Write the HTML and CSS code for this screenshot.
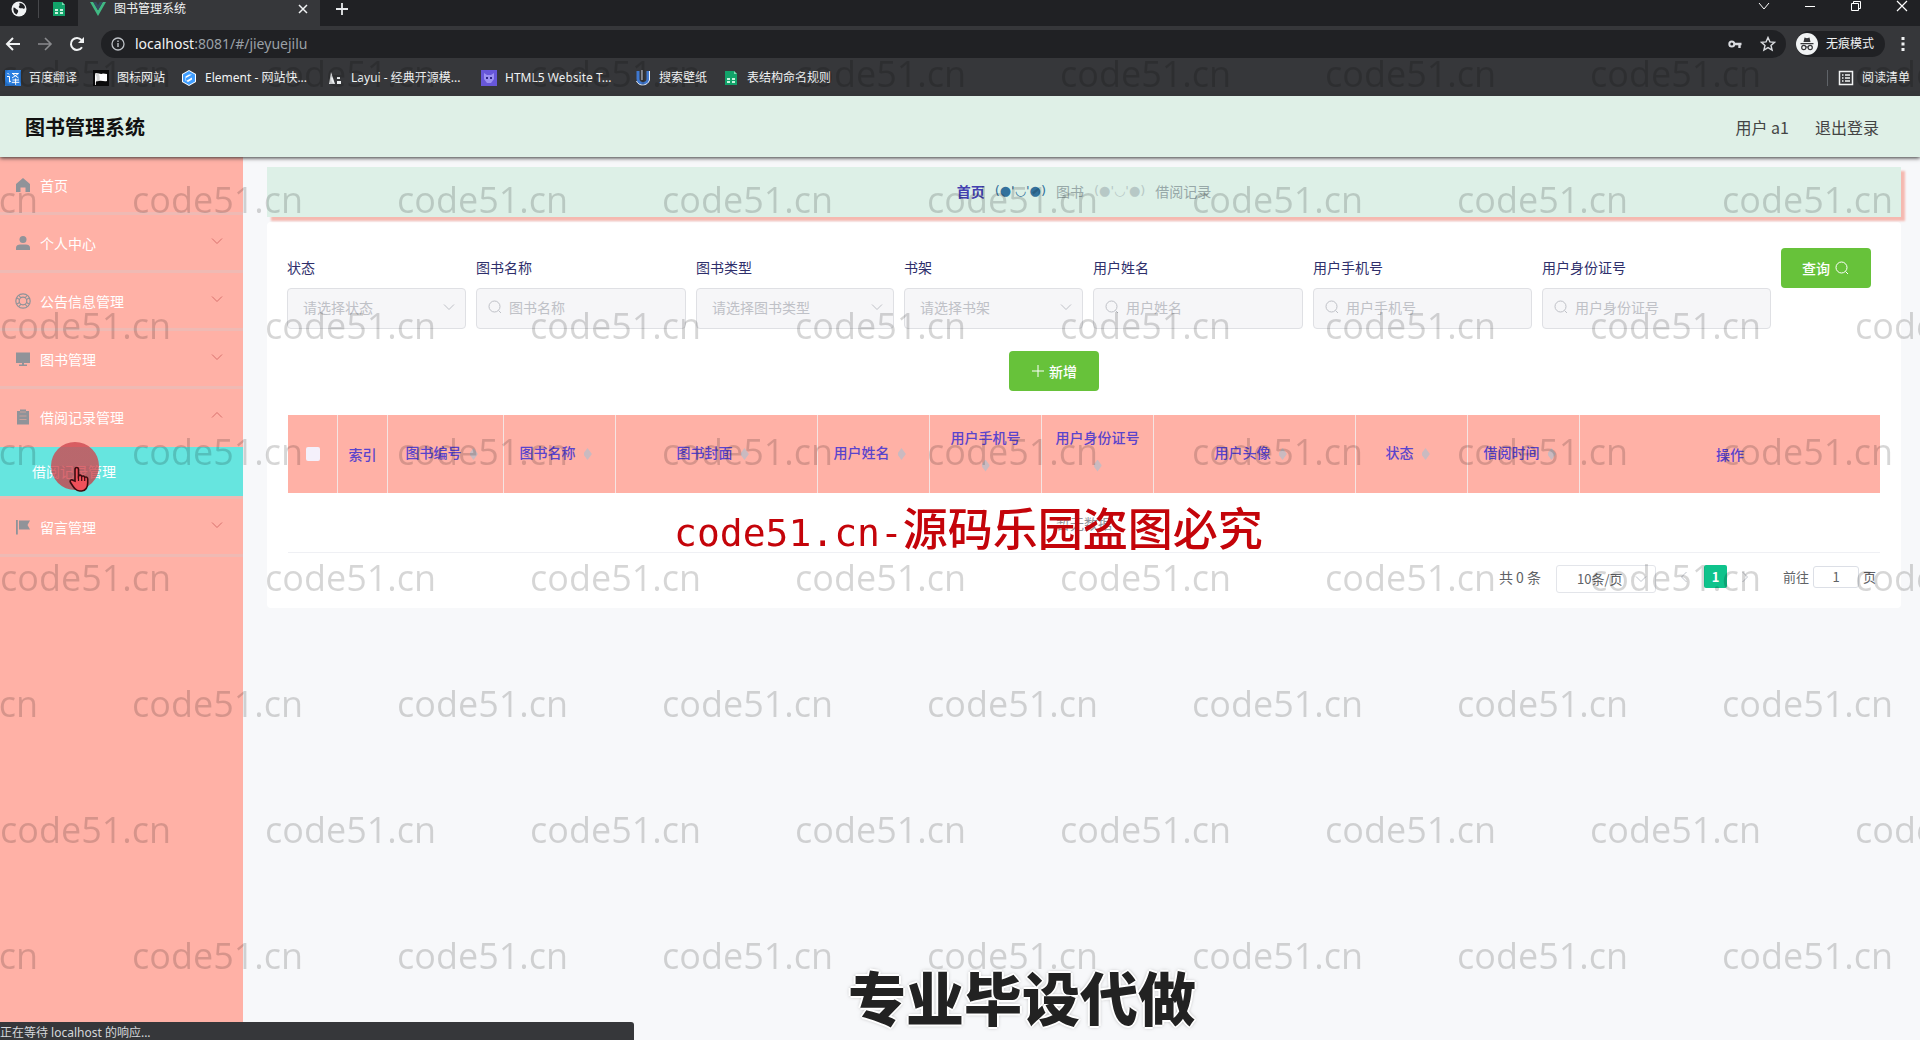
FILE: index.html
```html
<!DOCTYPE html>
<html lang="zh-CN">
<head>
<meta charset="utf-8">
<meta name="viewport" content="width=device-width, initial-scale=1">
<title>图书管理系统</title>
<link rel="stylesheet" href="styles.css">
</head>
<body>
<svg class="defs" aria-hidden="true">
  <symbol id="i-down" viewBox="0 0 12 12"><path d="M1 3.500l5 5 5-5" fill="none" stroke="currentColor"/></symbol>
  <symbol id="i-search" viewBox="0 0 16 16"><circle cx="7.500" cy="7.500" r="5.500" fill="none" stroke="currentColor"/><path d="M11.500 11.500l2.500 2.500" stroke="currentColor"/></symbol>
  <symbol id="i-sheet" viewBox="0 0 16 16"><path d="M2 1h9l3 3v11H2z" fill="#12a36a"/><path d="M11 1l3 3h-3z" fill="#7fdcb4"/><path d="M4 8h3v2H4zm5 0h3v2H9zM4 11h3v2H4zm5 0h3v2H9z" fill="#c9f3df"/></symbol>
</svg>

<div class="browser">
  <div class="tabstrip">
    <button class="pin" aria-label="标签页"><svg width="16" height="16" viewBox="0 0 16 16"><circle cx="8" cy="8" r="7.500" fill="#f1f3f4"/><path d="M2.500 6.500c2 0 2 1.500 3.500 2s1.500 2 .5 3.500l-1 1.500C3.500 12.500 2 10.500 2.500 6.500zM8.500 2c-.5 1 .5 1.500 0 2.500S7 6 8.500 7s2.500-.5 3.500.5 2-.5 2-1.500C13 3.500 11 2 8.500 2z" fill="#202124"/></svg></button>
    <button class="pin second" aria-label="表格"><svg width="16" height="16"><use href="#i-sheet"/></svg></button>
    <div class="tab"><svg width="16" height="14" viewBox="0 0 16 14"><path d="M0 0h3.200L8 8.200 12.800 0H16L8 14z" fill="#41b883"/><path d="M3.200 0h3L8 3.200 9.800 0h3L8 8.200z" fill="#35495e"/></svg><span>图书管理系统</span><button class="x" aria-label="关闭"><svg width="10" height="10" viewBox="0 0 10 10"><path d="M1 1l8 8M9 1L1 9" stroke="#f1f3f4" stroke-width="1.500"/></svg></button></div>
    <button class="plus" aria-label="新标签页"><svg width="14" height="14" viewBox="0 0 14 14"><path d="M7 1v12M1 7h12" stroke="#e8eaed" stroke-width="1.800"/></svg></button>
    <div class="winctl">
      <button aria-label="搜索标签页"><svg width="12" height="12" viewBox="0 0 12 12"><path d="M1 3l5 6 5-6" fill="none" stroke="#fff"/></svg></button>
      <button aria-label="最小化"><svg width="12" height="12" viewBox="0 0 12 12"><path d="M1 6.500h10" stroke="#fff"/></svg></button>
      <button aria-label="还原"><svg width="12" height="12" viewBox="0 0 12 12"><path d="M1.500 3.500h7v7h-7zM3.500 3V1.500h7v7H9" fill="none" stroke="#fff"/></svg></button>
      <button aria-label="关闭窗口"><svg width="12" height="12" viewBox="0 0 12 12"><path d="M1 1l10 10M11 1L1 11" stroke="#fff" stroke-width="1.200"/></svg></button>
    </div>
  </div>
  <div class="toolbar">
    <button aria-label="后退"><svg width="16" height="16" viewBox="0 0 16 16"><path d="M15 8H2M8 2L2 8l6 6" fill="none" stroke="#f1f3f4" stroke-width="2"/></svg></button>
    <button aria-label="前进"><svg width="16" height="16" viewBox="0 0 16 16"><path d="M1 8h13M8 2l6 6-6 6" fill="none" stroke="#8a8b8e" stroke-width="1.600"/></svg></button>
    <button aria-label="刷新"><svg width="16" height="16" viewBox="0 0 16 16"><path d="M13 11.200A6 6 0 1 1 12.500 4" fill="none" stroke="#f1f3f4" stroke-width="2"/><path d="M15 1v6H9z" fill="#f1f3f4"/></svg></button>
    <div class="url">
      <svg width="14" height="14" viewBox="0 0 14 14"><circle cx="7" cy="7" r="6" fill="none" stroke="#bdc1c6" stroke-width="1.300"/><path d="M7 6v4M7 3.500v1.400" stroke="#bdc1c6" stroke-width="1.400"/></svg>
      <span class="addr">localhost<i>:8081/#/jieyuejilu</i></span>
      <svg class="key" width="14" height="14" viewBox="0 0 14 14"><circle cx="3.800" cy="7" r="2.500" fill="none" stroke="#dadce0" stroke-width="2"/><path d="M6 7h7.500M11.500 7v4" stroke="#dadce0" stroke-width="2.400"/></svg>
      <svg width="16" height="16" viewBox="0 0 16 16"><path d="M8 1.500l1.900 4.400 4.700.4-3.600 3.100 1.100 4.700L8 11.600l-4.100 2.500L5 9.400 1.400 6.300l4.700-.4z" fill="none" stroke="#dadce0" stroke-width="1.400"/></svg>
    </div>
    <div class="incog"><svg width="22" height="22" viewBox="0 0 22 22"><circle cx="11" cy="11" r="11" fill="#f1f3f4"/><path d="M7.500 9l1-4.500 2.500.7 2.500-.7 1 4.500zM4.500 10h13v1.200h-13z" fill="#36373a"/><g fill="none" stroke="#36373a" stroke-width="1.200"><circle cx="7.800" cy="14.500" r="2.100"/><circle cx="14.200" cy="14.500" r="2.100"/><path d="M10 14.300q1-.8 2 0"/></g></svg><span>无痕模式</span></div>
    <button aria-label="菜单"><svg width="4" height="16" viewBox="0 0 4 16"><path d="M.5 1h3v3h-3zm0 5.500h3v3h-3zm0 5.500h3v3h-3z" fill="#f1f3f4"/></svg></button>
  </div>
  <nav class="bookmarks" aria-label="书签">
    <a href="#"><svg width="16" height="16" viewBox="0 0 16 16"><path d="M0 0h16v16H0z" fill="#2b7fe0"/><path d="M2.500 3l1.500 1.500M2 6.500h2.500V12l1.500-1M7 3.500h6.500L7 8M8 4l5.500 4M7.500 10H14M6.800 12.300h7.500M10.600 8.500V15" fill="none" stroke="#fff"/></svg>百度翻译</a>
    <a href="#"><svg width="16" height="16" viewBox="0 0 16 16"><path d="M0 0h16v16H0z" fill="#0b0b0c"/><path d="M2 3.500c3-1.500 5 1.500 8 0l4 .5v7c-3 1-5-1-8 0l-3 .5V15H2z" fill="#fff"/></svg>图标网站</a>
    <a class="bm-m" href="#"><svg width="16" height="16" viewBox="0 0 16 16"><path d="M8 0l7 4v8l-7 4-7-4V4z" fill="#fff"/><path d="M8 1l6 3.500v7L8 15l-6-3.500v-7z" fill="#409eff"/><path d="M11 4.500L5 8v3l6-3.500v2L7 12 4.500 10.500v-4L8 4.500z" fill="#fff"/></svg>Element - 网站快...</a>
    <a class="bm-l" href="#"><svg width="16" height="16" viewBox="0 0 16 16"><path d="M4 2l4 12H2zM10 7h3v2h-3zm0 4h4v3h-4z" fill="#eceff1"/></svg>Layui - 经典开源模...</a>
    <a class="bm-l" href="#"><svg width="16" height="16" viewBox="0 0 16 16"><path d="M0 0h16v16H0z" fill="#6757d9"/><path d="M3 3l3 2h4l3-2v6l-3 4H6L3 9z" fill="#9c91f2"/><path d="M5 7h2v2H5zm4 0h2v2H9z" fill="#30288a"/></svg>HTML5 Website T...</a>
    <a href="#"><svg width="16" height="16" viewBox="0 0 16 16"><path d="M3 1v8c0 6 10 6 10 0V1" fill="none" stroke="#3f78cf" stroke-width="3"/><path d="M1.500 11c2 5.500 11 5.500 13-1V1M7 0v10" fill="none" stroke="#e5edf9"/></svg>搜索壁纸</a>
    <a href="#"><svg width="16" height="16"><use href="#i-sheet"/></svg>表结构命名规则</a>
    <a href="#" class="reading"><svg width="16" height="16" viewBox="0 0 16 16"><path d="M1.500 1.500h13v13h-13zM4 5h1.500M7 5h5M4 8h1.500M7 8h5M4 11h1.500M7 11h5" fill="none" stroke="#f1f3f4" stroke-width="1.500"/></svg>阅读清单</a>
  </nav>
</div>

<header class="header">
  <h1>图书管理系统</h1>
  <div class="user"><span>用户 a1</span><a href="#">退出登录</a></div>
</header>

<div class="layout">
  <aside class="sidebar">
    <a class="item" href="#"><svg width="16" height="16" viewBox="0 0 16 16"><path d="M8 1L1 7v8h4.500v-4.500h5V15H15V7z"/></svg><span>首页</span></a>
    <a class="item" href="#"><svg width="16" height="16" viewBox="0 0 16 16"><circle cx="8" cy="4.500" r="3.500"/><path d="M1 15v-2.500C1 10.500 3 9.500 5 9.500h6c2 0 4 1 4 3V15z"/></svg><span>个人中心</span><svg class="arrow" width="12" height="12"><use href="#i-down"/></svg></a>
    <a class="item" href="#"><svg width="16" height="16" viewBox="0 0 16 16"><g fill="none" stroke="#909399" stroke-width="1.200"><circle cx="8" cy="8" r="7.200"/><circle cx="8" cy="8" r="3.800"/><path d="M4 2.500l2 2.500M12 2.500L10 5M4 13.500L6 11M12 13.500L10 11M2 5l2.500 1.500M14 5l-2.500 1.500M2 11l2.500-1.500M14 11l-2.500-1.500"/></g></svg><span>公告信息管理</span><svg class="arrow" width="12" height="12"><use href="#i-down"/></svg></a>
    <a class="item" href="#"><svg width="16" height="16" viewBox="0 0 16 16"><path d="M1 1.500h14V12H1zM7 12h2v1.500h3V15H4v-1.500h3z"/></svg><span>图书管理</span><svg class="arrow" width="12" height="12"><use href="#i-down"/></svg></a>
    <a class="item open" href="#"><svg width="16" height="16" viewBox="0 0 16 16"><path d="M2 2h3V.5h6V2h3v13.500H2z"/><path d="M5 3h6M4.500 7h7M4.500 10.500h7" stroke="#c9a19a"/></svg><span>借阅记录管理</span><svg class="arrow up" width="12" height="12"><use href="#i-down"/></svg></a>
    <a class="subitem" href="#">借阅记录管理</a>
    <a class="item" href="#"><svg width="16" height="16" viewBox="0 0 16 16"><path d="M1 1h1.800v14.500H1zM4 1.500h11L12.500 6 15 10.500H4z"/></svg><span>留言管理</span><svg class="arrow" width="12" height="12"><use href="#i-down"/></svg></a>
  </aside>

  <main class="main">
    <nav class="crumbs" aria-label="面包屑">
      <a href="#">首页</a><span class="face first">(●'◡'●)</span><span>图书</span><span class="face">(●'◡'●)</span><span>借阅记录</span>
    </nav>
    <section class="card">
      <form class="filters">
        <div class="field w-s"><label for="f1">状态</label><div class="box sel"><select id="f1"><option>请选择状态</option></select><svg width="12" height="12"><use href="#i-down"/></svg></div></div>
        <div class="field w-m"><label for="f2">图书名称</label><div class="box"><svg width="16" height="16"><use href="#i-search"/></svg><input id="f2" type="text" placeholder="图书名称"></div></div>
        <div class="field w-t"><label for="f3">图书类型</label><div class="box sel"><select id="f3"><option>请选择图书类型</option></select><svg width="12" height="12"><use href="#i-down"/></svg></div></div>
        <div class="field w-s"><label for="f4">书架</label><div class="box sel"><select id="f4"><option>请选择书架</option></select><svg width="12" height="12"><use href="#i-down"/></svg></div></div>
        <div class="field w-m"><label for="f5">用户姓名</label><div class="box"><svg width="16" height="16"><use href="#i-search"/></svg><input id="f5" type="text" placeholder="用户姓名"></div></div>
        <div class="field w-l"><label for="f6">用户手机号</label><div class="box"><svg width="16" height="16"><use href="#i-search"/></svg><input id="f6" type="text" placeholder="用户手机号"></div></div>
        <div class="field w-xl"><label for="f7">用户身份证号</label><div class="box"><svg width="16" height="16"><use href="#i-search"/></svg><input id="f7" type="text" placeholder="用户身份证号"></div></div>
        <button class="btn" type="button">查询<svg width="16" height="16"><use href="#i-search"/></svg></button>
      </form>
      <div class="actions"><button class="btn" type="button"><svg width="14" height="14" viewBox="0 0 14 14"><path d="M7 1v12M1 7h12" stroke="currentColor"/></svg>新增</button></div>
      <table class="grid">
        <colgroup><col class="c-50"><col class="c-50"><col class="c-116"><col class="c-112"><col class="c-202"><col class="c-112"><col class="c-112"><col class="c-112"><col class="c-202"><col class="c-112"><col class="c-112"><col></colgroup>
        <thead><tr>
          <th><input type="checkbox" aria-label="全选"></th><th>索引</th>
          <th>图书编号<span class="caret"></span></th><th>图书名称<span class="caret"></span></th><th>图书封面<span class="caret"></span></th><th>用户姓名<span class="caret"></span></th><th>用户手机号<span class="caret"></span></th><th>用户身份证号<span class="caret"></span></th><th>用户头像<span class="caret"></span></th><th>状态<span class="caret"></span></th><th>借阅时间<span class="caret"></span></th><th>操作</th>
        </tr></thead>
        <tbody><tr><td colspan="12">暂无数据</td></tr></tbody>
      </table>
      <div class="pager">
        <span class="total">共 0 条</span>
        <div class="size"><select aria-label="每页条数"><option>10条/页</option></select><svg width="12" height="12"><use href="#i-down"/></svg></div>
        <button class="prev" aria-label="上一页"><svg width="12" height="12"><use href="#i-down"/></svg></button>
        <button class="page">1</button>
        <button class="next" aria-label="下一页"><svg width="12" height="12"><use href="#i-down"/></svg></button>
        <label class="jump">前往<input type="text" value="1">页</label>
      </div>
    </section>
  </main>
</div>

<div class="status">正在等待 localhost 的响应...</div>

<div class="pointer"><svg width="20" height="26" viewBox="0 0 20 26"><path d="M6 15V3.500C6 .8 9.500.8 9.500 3.500V10c1-1.500 3-1 3.200.5 1-1 2.800-.6 3 .8 1.200-.8 3-.2 3 1.700v4c0 4-2 8-6 8h-2C7 25 5 22 1.500 16.500c-1-2 1-3.500 2.500-2.200z" fill="#f0505a" stroke="#3c0c10" stroke-width="1.600"/><path d="M9.500 10v5M12.700 11v4M15.700 12v3" stroke="#3c0c10" stroke-width="1.200"/></svg></div>

<div class="watermark" aria-hidden="true">
  <div><span>code51.cn</span><span>code51.cn</span><span>code51.cn</span><span>code51.cn</span><span>code51.cn</span><span>code51.cn</span><span>code51.cn</span><span>code51.cn</span></div>
  <div><span>code51.cn</span><span>code51.cn</span><span>code51.cn</span><span>code51.cn</span><span>code51.cn</span><span>code51.cn</span><span>code51.cn</span><span>code51.cn</span></div>
  <div><span>code51.cn</span><span>code51.cn</span><span>code51.cn</span><span>code51.cn</span><span>code51.cn</span><span>code51.cn</span><span>code51.cn</span><span>code51.cn</span></div>
  <div><span>code51.cn</span><span>code51.cn</span><span>code51.cn</span><span>code51.cn</span><span>code51.cn</span><span>code51.cn</span><span>code51.cn</span><span>code51.cn</span></div>
  <div><span>code51.cn</span><span>code51.cn</span><span>code51.cn</span><span>code51.cn</span><span>code51.cn</span><span>code51.cn</span><span>code51.cn</span><span>code51.cn</span></div>
  <div><span>code51.cn</span><span>code51.cn</span><span>code51.cn</span><span>code51.cn</span><span>code51.cn</span><span>code51.cn</span><span>code51.cn</span><span>code51.cn</span></div>
  <div><span>code51.cn</span><span>code51.cn</span><span>code51.cn</span><span>code51.cn</span><span>code51.cn</span><span>code51.cn</span><span>code51.cn</span><span>code51.cn</span></div>
  <div><span>code51.cn</span><span>code51.cn</span><span>code51.cn</span><span>code51.cn</span><span>code51.cn</span><span>code51.cn</span><span>code51.cn</span><span>code51.cn</span></div>
</div>
<div class="notice"><span>code51.cn-</span>源码乐园盗图必究</div>
<div class="caption">专业毕设代做</div>
</body>
</html>
```
FILE: styles.css
```css
* { box-sizing: border-box; }
body {
  margin: 0;
  min-height: 100vh;
  display: flex;
  flex-direction: column;
  position: relative;
  overflow-x: hidden;
  background: #f7f8fa;
  font: 14px/24px "Noto Sans CJK SC", sans-serif;
  color: #606266;
}
button, input, select { font: inherit; color: inherit; }
button { border: 0; padding: 0; background: none; display: flex; align-items: center; justify-content: center; }
a { color: inherit; text-decoration: none; }
svg { flex: none; display: block; }
.defs { position: absolute; width: 0; height: 0; }

/* browser window */
.browser { background: #36373a; color: #f1f3f4; font: 12px/16px "Noto Sans", "Noto Sans CJK SC", sans-serif; }
.tabstrip { display: flex; height: 26px; background: #202124; }
.pin { width: 39px; height: 18px; border-right: 1px solid #47484b; }
.pin.second { border: 0; }
.tab { display: flex; align-items: center; gap: 8px; width: 242px; padding: 0 12px 8px; background: #36373a; }
.tab .x { margin-left: auto; }
.plus { width: 44px; height: 18px; }
.winctl { display: flex; gap: 34px; margin-left: auto; height: 12px; padding-right: 12px; }
.toolbar { display: flex; align-items: center; gap: 16px; height: 36px; padding: 0 15px 0 5px; }
.url { flex: 1; display: flex; align-items: center; gap: 10px; height: 28px; padding: 0 10px; border-radius: 14px; background: #202124; }
.addr { flex: 1; font-size: 14px; }
.addr i { font-style: normal; color: #9aa0a6; }
.key { margin-right: 8px; }
.incog { display: flex; align-items: center; gap: 8px; margin-left: -6px; padding: 2px 11px 2px 0; border-radius: 14px; background: #202124; }
.bookmarks { display: flex; align-items: center; gap: 16px; height: 34px; padding: 0 10px 3px 5px; }
.bookmarks a { display: flex; align-items: center; gap: 8px; white-space: nowrap; }
.bm-m { min-width: 130px; }
.bm-l { min-width: 138px; }
.bookmarks .reading { margin-left: auto; padding-left: 10px; border-left: 1px solid #5f6368; }

/* application header */
.header { display: flex; align-items: center; justify-content: space-between; height: 61px; padding: 0 41px 0 25px; background: #dff0e7; box-shadow: 0 1px 4px #333; position: relative; z-index: 1; }
.header h1 { margin: 0; font-size: 20px; font-weight: 700; color: #111; }
.user { display: flex; gap: 26px; font-size: 16px; color: #444; }

.layout { flex: 1; display: flex; }
.sidebar { width: 243px; background: #ffb1a6; color: #fff; }
.item { display: flex; align-items: center; gap: 9px; height: 58px; padding: 0 20px 0 15px; border-bottom: 3px solid #efbab4; }
.item svg { fill: #909399; }
.item.open { border-bottom-color: #ffb1a6; }
.item .arrow { margin-left: auto; margin-bottom: 4px; color: #d9706c; }
.item .up { transform: rotate(180deg); }
.subitem { display: block; height: 52px; padding-left: 32px; line-height: 48px; background: #66e5df; border-bottom: 3px solid #efbab4; }

.main { flex: 1; min-width: 0; padding: 10px 19px 20px 24px; }
.crumbs { display: flex; align-items: center; justify-content: center; gap: 10px; height: 50px; padding-bottom: 2px; background: #ddf0e7; box-shadow: 4px 4px 2px #f5b9b0; color: #97a8a8; position: relative; }
.crumbs a { font-weight: 700; color: #4340b0; }
.face { color: #b7c8c6; font-family: "DejaVu Sans", sans-serif; font-size: 13px; }
.face.first { color: #33719c; }

.card { margin-top: 5px; padding: 26px 20px 20px; background: #fff; border-radius: 4px; }
.filters { display: flex; flex-wrap: wrap; gap: 10px; align-items: flex-start; }
.filters label { display: block; height: 40px; line-height: 38px; color: #2f2f6b; }
.w-s { width: 179px; }
.w-m { width: 210px; }
.w-t { width: 198px; }
.w-l { width: 219px; }
.w-xl { width: 229px; }
.box { display: flex; align-items: center; gap: 6px; height: 41px; padding: 0 10px 3px; border: 1px solid #dfe0e4; border-radius: 4px; background: #f6f6f8; color: #bfc1c7; }
.box.sel { padding-left: 15px; }
.box input, .box select { flex: 1; min-width: 0; width: 100%; padding: 0; border: 0; outline: 0; background: none; appearance: none; line-height: 24px; }
.box input::placeholder { color: #bfc1c7; opacity: 1; }
.btn { gap: 4px; width: 90px; height: 40px; border-radius: 4px; background: #67c23a; color: #fff; font-weight: 500; }
.actions { display: flex; justify-content: center; padding: 22px 60px 24px 0; }

.grid { width: calc(100% - 2px); margin: 0 1px; table-layout: fixed; border-collapse: separate; border-spacing: 0; }
.c-50 { width: 50px; }
.c-112 { width: 112px; }
.c-116 { width: 116px; }
.c-202 { width: 202px; }
.grid th { height: 78px; padding: 0 9px; border-right: 1px solid #f5e4e2; background: #ffb1a6; color: #5a44cc; font-weight: 500; line-height: 23px; }
.grid th:last-child { border-right: 0; }
.grid th input { appearance: none; display: block; width: 14px; height: 14px; margin: 0 auto; border-radius: 2px; background: #f4f0fb; }
.caret { display: inline-flex; width: 24px; height: 34px; align-items: center; justify-content: center; vertical-align: middle; }
.caret::before { content: ""; width: 8px; height: 12px; background: #cabac0; clip-path: polygon(50% 0, 100% 45%, 100% 55%, 50% 100%, 0 55%, 0 45%); }
.grid td { height: 60px; padding: 0; border-bottom: 1px solid #eff0f4; text-align: center; color: #909399; }

.pager { display: flex; align-items: center; justify-content: flex-end; height: 35px; padding: 12px 5px 0 0; font-size: 13px; }
.total { font-size: 14px; }
.size { display: flex; align-items: center; width: 100px; height: 28px; margin: 4px 0 0 15px; padding: 0 8px 0 20px; border: 1px solid #e3e5ea; border-radius: 3px; }
.size select { flex: 1; width: 60px; padding: 0; border: 0; background: none; appearance: none; }
.size svg, .prev, .next { color: #c0c4cc; }
.prev, .next { width: 24px; margin: 0 8px 0 16px; transform: rotate(90deg); }
.next { margin: 0 26px 0 6px; transform: rotate(-90deg); }
.page { width: 23px; height: 23px; border-radius: 2px; background: #0fc38c; color: #fff; font-weight: 700; }
.jump { display: flex; align-items: center; gap: 4px; }
.jump input { width: 46px; height: 22px; padding: 0; border: 1px solid #dcdfe6; border-radius: 3px; background: #fff; text-align: center; }

/* layers above the page */
.status { position: fixed; left: 0; bottom: 0; width: 33%; height: 18px; padding-top: 3px; border-radius: 0 3px 0 0; background: #36373a; color: #d5d7da; font: 12px/16px "Noto Sans", "Noto Sans CJK SC", sans-serif; overflow: hidden; }
.pointer { position: absolute; left: 51px; top: 442px; z-index: 2; width: 48px; height: 48px; border-radius: 50%; background: linear-gradient(rgba(206, 72, 80, .8) 50%, rgba(206, 55, 65, .75) 50%); }
.pointer svg { margin: 24px 0 0 18px; }
.watermark { position: absolute; inset: 0; padding-top: 11px; overflow: hidden; pointer-events: none; z-index: 3; color: rgba(0, 0, 0, .16); font: 36px/126px "Open Sans", sans-serif; }
.watermark div { display: flex; height: 126px; }
.watermark div:nth-child(even) { margin-left: -133px; }
.watermark span { flex: none; width: 265px; }
.notice { position: absolute; left: 674px; top: 497px; z-index: 4; white-space: nowrap; font-size: 45px; line-height: 60px; font-weight: 500; color: #c4040a; }
.notice span { font-family: "DejaVu Sans Mono", monospace; font-size: 38px; font-weight: 400; }
.caption { position: fixed; left: 848px; bottom: 9px; z-index: 4; font-size: 58px; line-height: 70px; font-weight: 900; color: #222; text-shadow: 0 0 2px #fff, 2px 0 #fff, -2px 0 #fff, 0 2px #fff, 0 -2px #fff, 0 0 4px #777; }
```
